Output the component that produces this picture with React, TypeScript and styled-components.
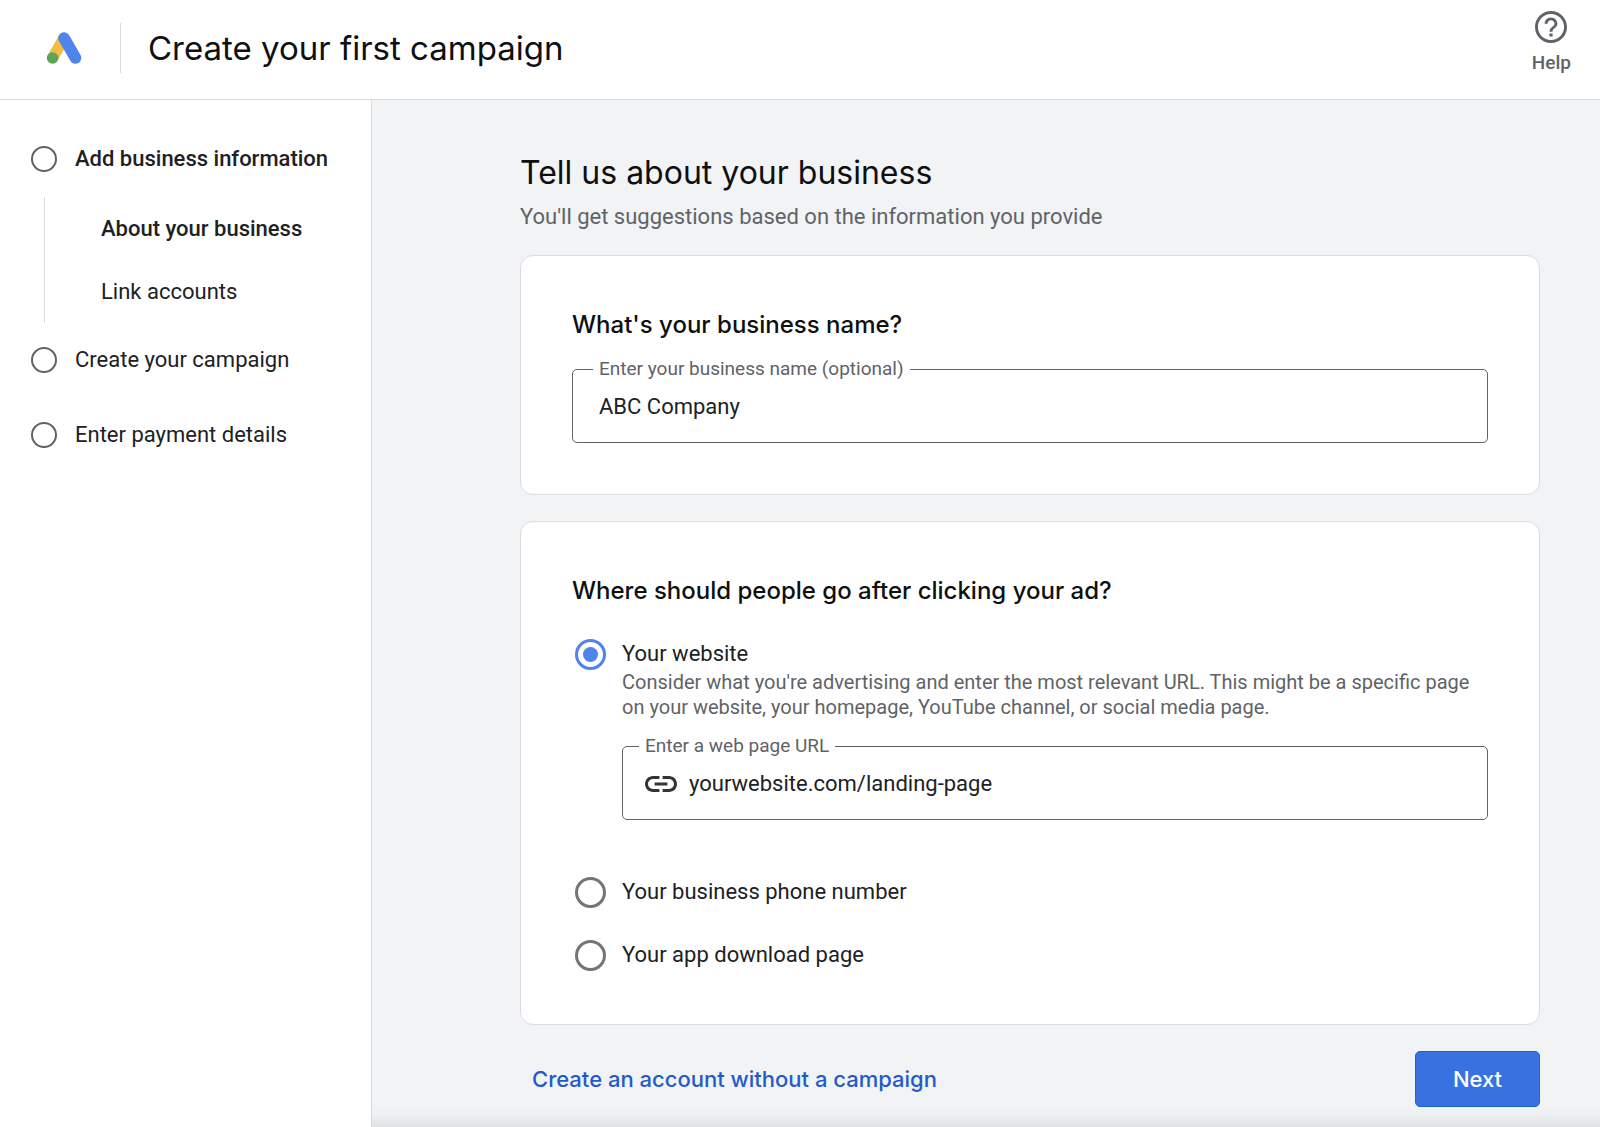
import React, { useState } from 'react';
import styled, { createGlobalStyle } from 'styled-components';

const body = 'Roboto, "Liberation Sans", sans-serif';
const display = 'Inter, "Liberation Sans", sans-serif';

const GlobalStyle = createGlobalStyle`
  *, *::before, *::after { box-sizing: border-box; }
  body { margin: 0; background: #fff; color: #202124; font-family: ${body}; }
  h1, h2, h3, p, ol, ul { margin: 0; padding: 0; }
  h1, h2, h3 { color: #0e0f11; }
  ol, ul { list-style: none; }
  button, input { font: inherit; }
`;

const Page = styled.div`
  display: flex;
  flex-direction: column;
  min-height: 100vh;
`;

const Header = styled.header`
  display: flex;
  align-items: center;
  height: 100px;
  padding: 0 29px 3px 46px;
  border-bottom: 1px solid #dadce0;
`;

const Logo = styled.svg`
  width: 36px;
  height: 32px;
  flex: none;
`;

const HeaderTitle = styled.h1`
  display: flex;
  align-items: center;
  height: 50px;
  margin-left: 38px;
  padding-left: 27px;
  border-left: 1px solid #dadce0;
  font: 400 33px/40px ${display};
`;

const HelpButton = styled.button`
  display: flex;
  flex-direction: column;
  align-items: center;
  gap: 8px;
  margin-left: auto;
  padding: 0 0 10px;
  border: 0;
  background: none;
  color: #5f6368;
  font: 500 19px/24px ${body};
  cursor: pointer;

  svg {
    width: 32px;
    height: 32px;
  }
`;

const Columns = styled.div`
  display: flex;
  flex: 1;
`;

const Sidebar = styled.nav`
  flex: none;
  width: 372px;
  padding: 46px 16px 0 31px;
  border-right: 1px solid #dadce0;
`;

const Step = styled.li`
  margin-bottom: 49px;
`;

const StepLink = styled.a<{ $current?: boolean }>`
  display: flex;
  align-items: center;
  gap: 18px;
  color: #202124;
  font-size: 22px;
  font-weight: ${(p) => (p.$current ? 500 : 400)};
  line-height: 26px;
  text-decoration: none;
  white-space: nowrap;

  &::before {
    content: '';
    flex: none;
    width: 26px;
    height: 26px;
    border: 2px solid #5f6368;
    border-radius: 50%;
  }
`;

const SubSteps = styled.ul`
  margin: 25px 0 -25px 13px;
  border-left: 1px solid #dadce0;
`;

const SubLink = styled.a<{ $current?: boolean }>`
  display: block;
  padding-left: 56px;
  color: #202124;
  font-size: 22px;
  font-weight: ${(p) => (p.$current ? 500 : 400)};
  line-height: 63px;
  text-decoration: none;
`;

const Main = styled.main`
  display: flex;
  flex: 1;
  flex-direction: column;
  min-width: 0;
  background: #f1f3f4;
`;

const Form = styled.form`
  display: flex;
  flex-direction: column;
  gap: 26px;
  padding: 54px 60px 0 148px;
`;

const Intro = styled.div`
  h2 {
    font: 400 32px/38px ${display};
  }

  p {
    margin-top: 12px;
    color: #5f6368;
    font-size: 22px;
    line-height: 25px;
  }
`;

const Card = styled.section`
  padding: 51px;
  border: 1px solid #dadce0;
  border-radius: 13px;
  background: #fff;
`;

const CardTitle = styled.h3`
  margin-bottom: 14px;
  font: 500 24px/36px ${display};
`;

const Field = styled.fieldset<{ $inset: number }>`
  min-width: 0;
  height: 86px;
  margin: 0;
  padding: 13px ${(p) => p.$inset}px 0;
  border: 1px solid #5f6368;
  border-radius: 5px;

  legend {
    height: 24px;
    padding: 0 6px;
    color: #5f6368;
    font-size: 19px;
    line-height: 24px;
  }
`;

const FieldRow = styled.div`
  display: flex;
  align-items: center;
  gap: 12px;
  height: 26px;
  padding: 0 6px;

  svg {
    flex: none;
    width: 32px;
    height: 16px;
  }
`;

const TextInput = styled.input`
  flex: 1;
  min-width: 0;
  height: 26px;
  padding: 0;
  border: 0;
  outline: 0;
  background: none;
  color: #202124;
  font-size: 22px;
  line-height: 26px;
`;

const Options = styled.div`
  display: flex;
  flex-direction: column;
  gap: 31px;
  margin: 29px 0 2px;
`;

const Option = styled.div`
  display: grid;
  grid-template-columns: 31px 1fr;
  column-gap: 16px;
  align-items: center;
  padding-left: 3px;

  > label {
    font-size: 22px;
    line-height: 32px;
  }
`;

const Radio = styled.input`
  display: grid;
  place-content: center;
  width: 31px;
  height: 31px;
  margin: 0;
  border: 3px solid #757575;
  border-radius: 50%;
  appearance: none;
  cursor: pointer;

  &:checked {
    border-color: #4f83ee;
  }

  &:checked::before {
    content: '';
    width: 15px;
    height: 15px;
    border-radius: 50%;
    background: #4f83ee;
  }
`;

const OptionDetail = styled.div`
  grid-column: 2;
  margin-bottom: 25px;

  p {
    margin-bottom: 14px;
    color: #5f6368;
    font-size: 20px;
    line-height: 25px;
  }
`;

const Actions = styled.div`
  display: flex;
  align-items: center;
  justify-content: space-between;
  padding-left: 12px;
`;

const SkipLink = styled.a`
  color: #2459ce;
  font: 500 22px/28px ${display};
  text-decoration: none;
`;

const NextButton = styled.button`
  width: 125px;
  height: 56px;
  border: 1px solid #1a65d8;
  border-radius: 5px;
  background: #3871e0;
  color: #fff;
  font: 500 22px/28px ${display};
  cursor: pointer;
`;

const BottomFade = styled.div`
  height: 20px;
  margin-top: auto;
  background: linear-gradient(#f1f3f4, #edeff0 45%, #dfe1e2);
`;

const AdsLogo = () => (
  <Logo viewBox="0 0 36 32" aria-label="Ads" role="img">
    <path d="M18 6 6.5 26" stroke="#f2bd42" strokeWidth="11.4" />
    <path d="M18 6 29.5 26" stroke="#5084ed" strokeWidth="11.6" strokeLinecap="round" />
    <circle cx="6.6" cy="26" r="5.8" fill="#58a55c" />
  </Logo>
);

const HelpIcon = () => (
  <svg viewBox="2 2 20 20" fill="currentColor" aria-hidden="true">
    <path d="M11 18h2v-2h-2v2zm1-16C6.48 2 2 6.48 2 12s4.48 10 10 10 10-4.48 10-10S17.52 2 12 2zm0 18.2c-4.52 0-8.2-3.68-8.2-8.2S7.48 3.8 12 3.8s8.2 3.68 8.2 8.2-3.68 8.2-8.2 8.2zM12 6c-2.21 0-4 1.79-4 4h1.8c0-1.2 1-2.2 2.2-2.2s2.2 1 2.2 2.2c0 2-3.1 1.75-3.1 5h1.8c0-2.25 3.1-2.5 3.1-5 0-2.21-1.79-4-4-4z" />
  </svg>
);

const LinkIcon = () => (
  <svg viewBox="2 7 20 10" fill="#303337" aria-hidden="true">
    <path d="M3.9 12c0-1.71 1.39-3.1 3.1-3.1h4V7H7c-2.76 0-5 2.24-5 5s2.24 5 5 5h4v-1.9H7c-1.71 0-3.1-1.39-3.1-3.1zM8 13h8v-2H8v2zm9-6h-4v1.9h4c1.71 0 3.1 1.39 3.1 3.1s-1.39 3.1-3.1 3.1h-4V17h4c2.76 0 5-2.24 5-5s-2.24-5-5-5z" />
  </svg>
);

export default function App() {
  const [name, setName] = useState('ABC Company');
  const [url, setUrl] = useState('yourwebsite.com/landing-page');
  const [goal, setGoal] = useState('website');

  const radio = (value: string) => (
    <Radio
      type="radio"
      name="destination"
      id={value}
      checked={goal === value}
      onChange={() => setGoal(value)}
    />
  );

  return (
    <Page>
      <GlobalStyle />
      <Header>
        <AdsLogo />
        <HeaderTitle>Create your first campaign</HeaderTitle>
        <HelpButton type="button">
          <HelpIcon />
          Help
        </HelpButton>
      </Header>
      <Columns>
        <Sidebar>
          <ol>
            <Step>
              <StepLink href="#business" $current>Add business information</StepLink>
              <SubSteps>
                <li><SubLink href="#about" $current>About your business</SubLink></li>
                <li><SubLink href="#accounts">Link accounts</SubLink></li>
              </SubSteps>
            </Step>
            <Step><StepLink href="#campaign">Create your campaign</StepLink></Step>
            <Step><StepLink href="#payment">Enter payment details</StepLink></Step>
          </ol>
        </Sidebar>
        <Main>
          <Form onSubmit={(e) => e.preventDefault()}>
            <Intro>
              <h2>Tell us about your business</h2>
              <p>You'll get suggestions based on the information you provide</p>
            </Intro>
            <Card>
              <CardTitle>What's your business name?</CardTitle>
              <Field $inset={20}>
                <legend><label htmlFor="name">Enter your business name (optional)</label></legend>
                <FieldRow>
                  <TextInput id="name" value={name} onChange={(e) => setName(e.target.value)} />
                </FieldRow>
              </Field>
            </Card>
            <Card>
              <CardTitle>Where should people go after clicking your ad?</CardTitle>
              <Options>
                <Option>
                  {radio('website')}
                  <label htmlFor="website">Your website</label>
                  <OptionDetail>
                    <p>
                      Consider what you're advertising and enter the most relevant URL. This might be a specific page
                      on your website, your homepage, YouTube channel, or social media page.
                    </p>
                    <Field $inset={16}>
                      <legend><label htmlFor="url">Enter a web page URL</label></legend>
                      <FieldRow>
                        <LinkIcon />
                        <TextInput id="url" value={url} onChange={(e) => setUrl(e.target.value)} />
                      </FieldRow>
                    </Field>
                  </OptionDetail>
                </Option>
                <Option>
                  {radio('phone')}
                  <label htmlFor="phone">Your business phone number</label>
                </Option>
                <Option>
                  {radio('app')}
                  <label htmlFor="app">Your app download page</label>
                </Option>
              </Options>
            </Card>
            <Actions>
              <SkipLink href="#skip">Create an account without a campaign</SkipLink>
              <NextButton type="submit">Next</NextButton>
            </Actions>
          </Form>
          <BottomFade />
        </Main>
      </Columns>
    </Page>
  );
}
